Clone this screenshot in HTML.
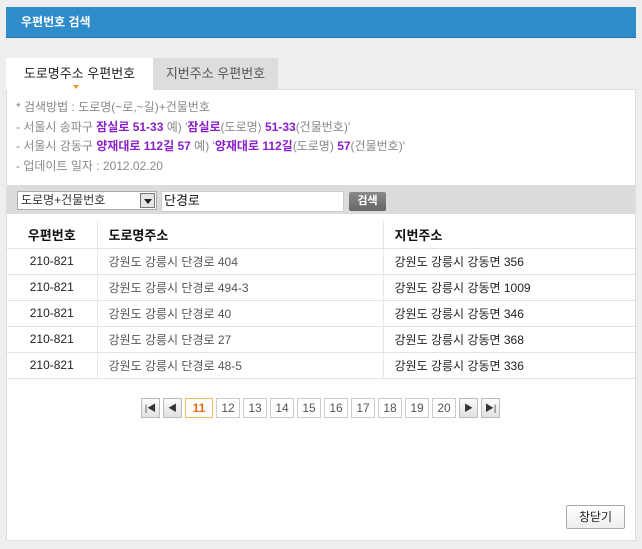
<!DOCTYPE html><html><head><meta charset="utf-8"><style>
*{margin:0;padding:0;box-sizing:border-box}
body{width:642px;height:549px;background:#eeeeee;position:relative;font-family:"Liberation Sans","Noto Sans CJK KR",sans-serif;font-size:12px;color:#333;overflow:hidden}
.a{position:absolute}
.hdr{left:6px;top:7px;width:630px;height:31px;background:#2e8ccb;color:#fff;font-weight:bold;font-size:12px;line-height:31px;padding-left:15px;border-bottom:1px solid #2575ad}
.panel{left:6px;top:89px;width:630px;height:452px;background:#fff;border:1px solid #ddd}
.tab1{left:6px;top:58px;width:147px;height:32px;background:#fff;font-size:13px;line-height:32px;text-align:center;color:#222}
.tab2{left:153px;top:58px;width:125px;height:31px;background:#ddd;font-size:13px;line-height:32px;text-align:center;color:#555}
.tri{left:73px;top:85px;width:0;height:0;border-left:3px solid transparent;border-right:3px solid transparent;border-top:4px solid #f29a1f}
.info{left:16px;top:98px;color:#888;font-size:12px;line-height:19.5px}
.info b{color:#8a1fc9}
.sbar{left:7px;top:185px;width:628px;height:29px;background:#dcdcdc}
.sel{left:17px;top:191px;width:140px;height:19px;background:#fff;border:1px solid #aaa;font-size:12px;line-height:17px;padding-left:3px;color:#333}
.sel i{position:absolute;right:1px;top:1px;width:15px;height:15px;background:#e6e6e6;border:1px solid #777}
.sel i:after{content:"";position:absolute;left:3px;top:5px;border-left:4px solid transparent;border-right:4px solid transparent;border-top:5px solid #222}
.inp{left:161px;top:191px;width:183px;height:21px;background:#fff;border:1px solid #ccc;font-size:13px;line-height:18px;padding-left:2px;color:#111}
.btn{left:349px;top:192px;width:37px;height:19px;background:linear-gradient(#8a8a8a,#666);border-radius:2px;color:#fff;font-weight:bold;font-size:11px;line-height:19px;text-align:center}
table{position:absolute;left:7px;top:221px;width:628px;border-collapse:collapse}
td,th{height:26px;border-bottom:1px solid #e3e3e3;font-size:12px}
th{height:27px;text-align:left;font-weight:bold;color:#111;font-size:13px}
td.c,th.c{text-align:center}
td{color:#555}
td.j{color:#222}
.l{border-left:1px solid #e8e8e8;padding-left:11px}
.pg{top:398px;height:20px;border:1px solid #ccc;background:#fff;font-size:12px;line-height:18px;text-align:center;color:#555}
.pg.ar{background:linear-gradient(#fafafa,#e2e2e2);border-color:#bbb;color:#333;font-size:9px}
.cl{left:566px;top:505px;width:59px;height:24px;border:1px solid #aaa;background:linear-gradient(#fff,#eee);border-radius:2px;font-size:12px;line-height:22px;text-align:center;color:#222}
</style></head><body>
<div class="a hdr">우편번호 검색</div>
<div class="a panel"></div>
<div class="a tab1">도로명주소 우편번호</div>
<div class="a tab2">지번주소 우편번호</div>
<div class="a tri"></div>
<div class="a info">* 검색방법 : 도로명(~로,~길)+건물번호<br>- 서울시 송파구 <b>잠실로 51-33</b> 예) '<b>잠실로</b>(도로명) <b>51-33</b>(건물번호)'<br>- 서울시 강동구 <b>양재대로 112길 57</b> 예) '<b>양재대로 112길</b>(도로명) <b>57</b>(건물번호)'<br>- 업데이트 일자 : 2012.02.20</div>
<div class="a sbar"></div>
<div class="a sel">도로명+건물번호<i></i></div>
<div class="a inp">단경로</div>
<div class="a btn">검색</div>
<table>
<tr><th class="c" style="width:90px">우편번호</th><th class="l" style="width:286px">도로명주소</th><th class="l">지번주소</th></tr>
<tr><td class="c j">210-821</td><td class="l">강원도 강릉시 단경로 404</td><td class="l j">강원도 강릉시 강동면 356</td></tr>
<tr><td class="c j">210-821</td><td class="l">강원도 강릉시 단경로 494-3</td><td class="l j">강원도 강릉시 강동면 1009</td></tr>
<tr><td class="c j">210-821</td><td class="l">강원도 강릉시 단경로 40</td><td class="l j">강원도 강릉시 강동면 346</td></tr>
<tr><td class="c j">210-821</td><td class="l">강원도 강릉시 단경로 27</td><td class="l j">강원도 강릉시 강동면 368</td></tr>
<tr><td class="c j">210-821</td><td class="l">강원도 강릉시 단경로 48-5</td><td class="l j">강원도 강릉시 강동면 336</td></tr>
</table>
<div class="a pg ar" style="left:141px;width:19px">|◀</div>
<div class="a pg ar" style="left:163px;width:19px">◀</div>
<div class="a pg" style="left:185px;width:28px;border-color:#f0c060;color:#e86a1a;font-weight:bold">11</div>
<div class="a pg" style="left:216px;width:24px">12</div>
<div class="a pg" style="left:243px;width:24px">13</div>
<div class="a pg" style="left:270px;width:24px">14</div>
<div class="a pg" style="left:297px;width:24px">15</div>
<div class="a pg" style="left:324px;width:24px">16</div>
<div class="a pg" style="left:351px;width:24px">17</div>
<div class="a pg" style="left:378px;width:24px">18</div>
<div class="a pg" style="left:405px;width:24px">19</div>
<div class="a pg" style="left:432px;width:24px">20</div>
<div class="a pg ar" style="left:459px;width:19px">▶</div>
<div class="a pg ar" style="left:481px;width:19px">▶|</div>
<div class="a cl">창닫기</div>
</body></html>
